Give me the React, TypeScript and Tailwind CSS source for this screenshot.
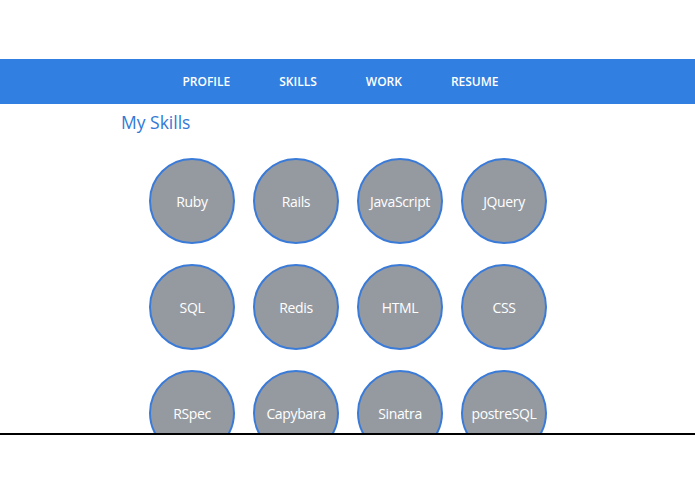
import React from 'react';

const navItems = ['PROFILE', 'SKILLS', 'WORK', 'RESUME'];

const skills = [
    'Ruby', 'Rails', 'JavaScript', 'JQuery',
    'SQL', 'Redis', 'HTML', 'CSS',
    'RSpec', 'Capybara', 'Sinatra', 'postreSQL',
];

export default function App() {
    return (
        <div className="w-[695px] h-[494px] bg-white overflow-hidden" style={{ fontFamily: '"Open Sans", "Noto Sans", sans-serif' }}>
            <div className="h-[59px]" />
            <nav className="h-[45px] bg-[#317fe1] flex items-center justify-center gap-[49px] pr-[14px]">
                {navItems.map((item) => (
                    <span key={item} className="text-white text-[12px] font-semibold">
                        {item}
                    </span>
                ))}
            </nav>
            <div className="h-[331px] overflow-hidden border-b-2 border-black">
                <h2 className="pl-[121px] pt-[5px] text-[17.5px] leading-[26px] text-[#3279d6]">My Skills</h2>
                <div className="pl-[149px] pt-[23px] grid grid-cols-[repeat(4,86px)] gap-x-[18px] gap-y-[20px]">
                    {skills.map((skill) => (
                        <div
                            key={skill}
                            className="w-[86px] h-[86px] rounded-full bg-[#959aa1] border-2 border-[#3b7bd8] flex items-center justify-center text-white text-[14px] tracking-tight"
                        >
                            {skill}
                        </div>
                    ))}
                </div>
            </div>
        </div>
    );
}
